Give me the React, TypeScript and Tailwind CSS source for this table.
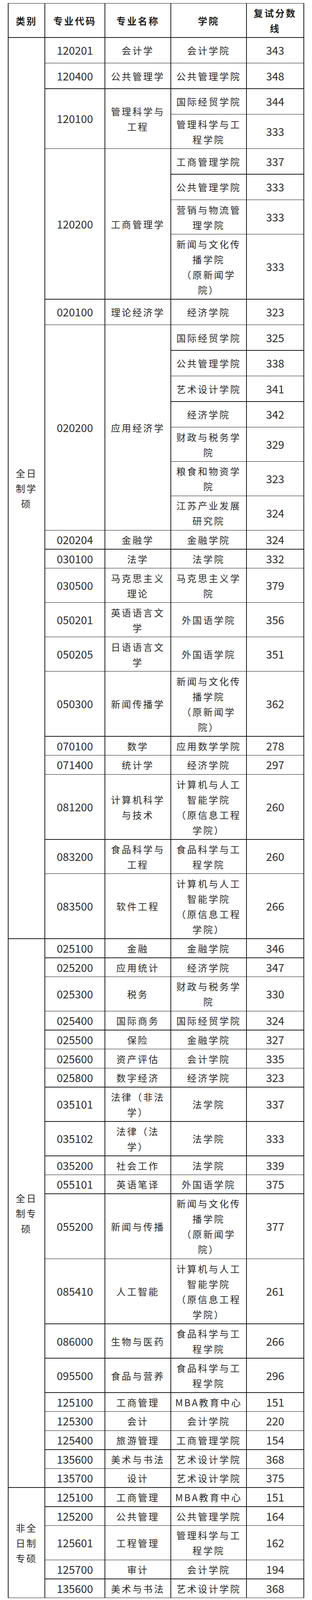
import React from "react";

type Sub = { school: string[]; score: string; h: number };
type Major = { code: string; name: string[]; subs: Sub[] };
type Section = { label: string[]; majors: Major[] };

// row heights of the reference, fitted to the 4096px window, minus the rule
const heightClass: Record<number, string> = {
  52: "h-[47.15px]",
  70: "h-[64px]",
  94: "h-[86.45px]",
  178: "h-[165px]",
};

const xinwen = ["新闻与文化传", "播学院", "（原新闻学", "院）"];
const jisuanji = ["计算机与人工", "智能学院", "（原信息工程", "学院）"];
const shipin = ["食品科学与工", "程学院"];

const one = (code: string, name: string, school: string, score: string, h = 52): Major => ({
  code,
  name: [name],
  subs: [{ school: [school], score, h }],
});

const sections: Section[] = [
  {
    label: ["全日", "制学", "硕"],
    majors: [
      one("120201", "会计学", "会计学院", "343", 70),
      one("120400", "公共管理学", "公共管理学院", "348", 70),
      {
        code: "120100",
        name: ["管理科学与", "工程"],
        subs: [
          { school: ["国际经贸学院"], score: "344", h: 70 },
          { school: ["管理科学与工", "程学院"], score: "333", h: 94 },
        ],
      },
      {
        code: "120200",
        name: ["工商管理学"],
        subs: [
          { school: ["工商管理学院"], score: "337", h: 70 },
          { school: ["公共管理学院"], score: "333", h: 70 },
          { school: ["营销与物流管", "理学院"], score: "333", h: 94 },
          { school: xinwen, score: "333", h: 178 },
        ],
      },
      one("020100", "理论经济学", "经济学院", "323", 70),
      {
        code: "020200",
        name: ["应用经济学"],
        subs: [
          { school: ["国际经贸学院"], score: "325", h: 70 },
          { school: ["公共管理学院"], score: "338", h: 70 },
          { school: ["艺术设计学院"], score: "341", h: 70 },
          { school: ["经济学院"], score: "342", h: 70 },
          { school: ["财政与税务学", "院"], score: "329", h: 94 },
          { school: ["粮食和物资学", "院"], score: "323", h: 94 },
          { school: ["江苏产业发展", "研究院"], score: "324", h: 94 },
        ],
      },
      one("020204", "金融学", "金融学院", "324"),
      one("030100", "法学", "法学院", "332"),
      {
        code: "030500",
        name: ["马克思主义", "理论"],
        subs: [{ school: ["马克思主义学", "院"], score: "379", h: 94 }],
      },
      { code: "050201", name: ["英语语言文", "学"], subs: [{ school: ["外国语学院"], score: "356", h: 94 }] },
      { code: "050205", name: ["日语语言文", "学"], subs: [{ school: ["外国语学院"], score: "351", h: 94 }] },
      { code: "050300", name: ["新闻传播学"], subs: [{ school: xinwen, score: "362", h: 178 }] },
      one("070100", "数学", "应用数学学院", "278"),
      one("071400", "统计学", "经济学院", "297"),
      { code: "081200", name: ["计算机科学", "与技术"], subs: [{ school: jisuanji, score: "260", h: 178 }] },
      { code: "083200", name: ["食品科学与", "工程"], subs: [{ school: shipin, score: "260", h: 94 }] },
      { code: "083500", name: ["软件工程"], subs: [{ school: jisuanji, score: "266", h: 178 }] },
    ],
  },
  {
    label: ["全日", "制专", "硕"],
    majors: [
      one("025100", "金融", "金融学院", "346"),
      one("025200", "应用统计", "经济学院", "347"),
      { code: "025300", name: ["税务"], subs: [{ school: ["财政与税务学", "院"], score: "330", h: 94 }] },
      one("025400", "国际商务", "国际经贸学院", "324"),
      one("025500", "保险", "金融学院", "327"),
      one("025600", "资产评估", "会计学院", "335"),
      one("025800", "数字经济", "经济学院", "323"),
      { code: "035101", name: ["法律（非法", "学）"], subs: [{ school: ["法学院"], score: "337", h: 94 }] },
      { code: "035102", name: ["法律（法", "学）"], subs: [{ school: ["法学院"], score: "333", h: 94 }] },
      one("035200", "社会工作", "法学院", "339"),
      one("055101", "英语笔译", "外国语学院", "375"),
      { code: "055200", name: ["新闻与传播"], subs: [{ school: xinwen, score: "377", h: 178 }] },
      { code: "085410", name: ["人工智能"], subs: [{ school: jisuanji, score: "261", h: 178 }] },
      { code: "086000", name: ["生物与医药"], subs: [{ school: shipin, score: "266", h: 94 }] },
      { code: "095500", name: ["食品与营养"], subs: [{ school: shipin, score: "296", h: 94 }] },
      one("125100", "工商管理", "MBA教育中心", "151"),
      one("125300", "会计", "会计学院", "220"),
      one("125400", "旅游管理", "工商管理学院", "154"),
      one("135600", "美术与书法", "艺术设计学院", "368"),
      one("135700", "设计", "艺术设计学院", "375"),
    ],
  },
  {
    label: ["非全", "日制", "专硕"],
    majors: [
      one("125100", "工商管理", "MBA教育中心", "151"),
      one("125200", "公共管理", "公共管理学院", "164"),
      { code: "125601", name: ["工程管理"], subs: [{ school: ["管理科学与工", "程学院"], score: "162", h: 94 }] },
      one("125700", "审计", "会计学院", "194"),
      one("135600", "美术与书法", "艺术设计学院", "368"),
    ],
  },
];

const cell = "flex flex-col items-center justify-center bg-white text-center whitespace-nowrap";
const num = "text-[28px] tracking-normal";

const Lines = ({ lines }: { lines: string[] }) => (
  <>
    {lines.map((l, i) => (
      <div key={i}>{l}</div>
    ))}
  </>
);

export default function App() {
  return (
    <div className="w-[800px] bg-white px-[20px] pt-[7.5px] pb-1 font-['Noto_Sans_CJK_SC','Noto_Sans',sans-serif] text-[24px] leading-[39px] tracking-[3.6px] text-[#2b2b2b]">
      <div className="flex flex-col gap-y-[1.5px] bg-[#1c1c1c] px-[2px] py-[1.5px]">
        <div className="flex h-[86.45px] gap-x-[2px] font-bold text-[#1f1f1f]">
          <div className={`${cell} w-[92px]`}>类别</div>
          <div className={`${cell} w-[152px]`}>专业代码</div>
          <div className={`${cell} w-[167px]`}>专业名称</div>
          <div className={`${cell} w-[192px]`}>学院</div>
          <div className={`${cell} flex-1`}>
            <Lines lines={["复试分数", "线"]} />
          </div>
        </div>

        {sections.map((sec, si) => (
          <div key={si} className="flex gap-x-[2px]">
            <div className={`${cell} w-[92px]`}>
              <Lines lines={sec.label} />
            </div>
            <div className="flex flex-1 flex-col gap-y-[1.5px]">
              {sec.majors.map((m, mi) => (
                <div key={mi} className="flex gap-x-[2px]">
                  <div className={`${cell} ${num} w-[152px]`}>{m.code}</div>
                  <div className={`${cell} w-[167px]`}>
                    <Lines lines={m.name} />
                  </div>
                  <div className="flex flex-1 flex-col gap-y-[1.5px]">
                    {m.subs.map((s, ri) => (
                      <div key={ri} className={`flex gap-x-[2px] ${heightClass[s.h]}`}>
                        <div className={`${cell} w-[192px]`}>
                          <Lines lines={s.school} />
                        </div>
                        <div className={`${cell} ${num} flex-1`}>{s.score}</div>
                      </div>
                    ))}
                  </div>
                </div>
              ))}
            </div>
          </div>
        ))}
      </div>
    </div>
  );
}
